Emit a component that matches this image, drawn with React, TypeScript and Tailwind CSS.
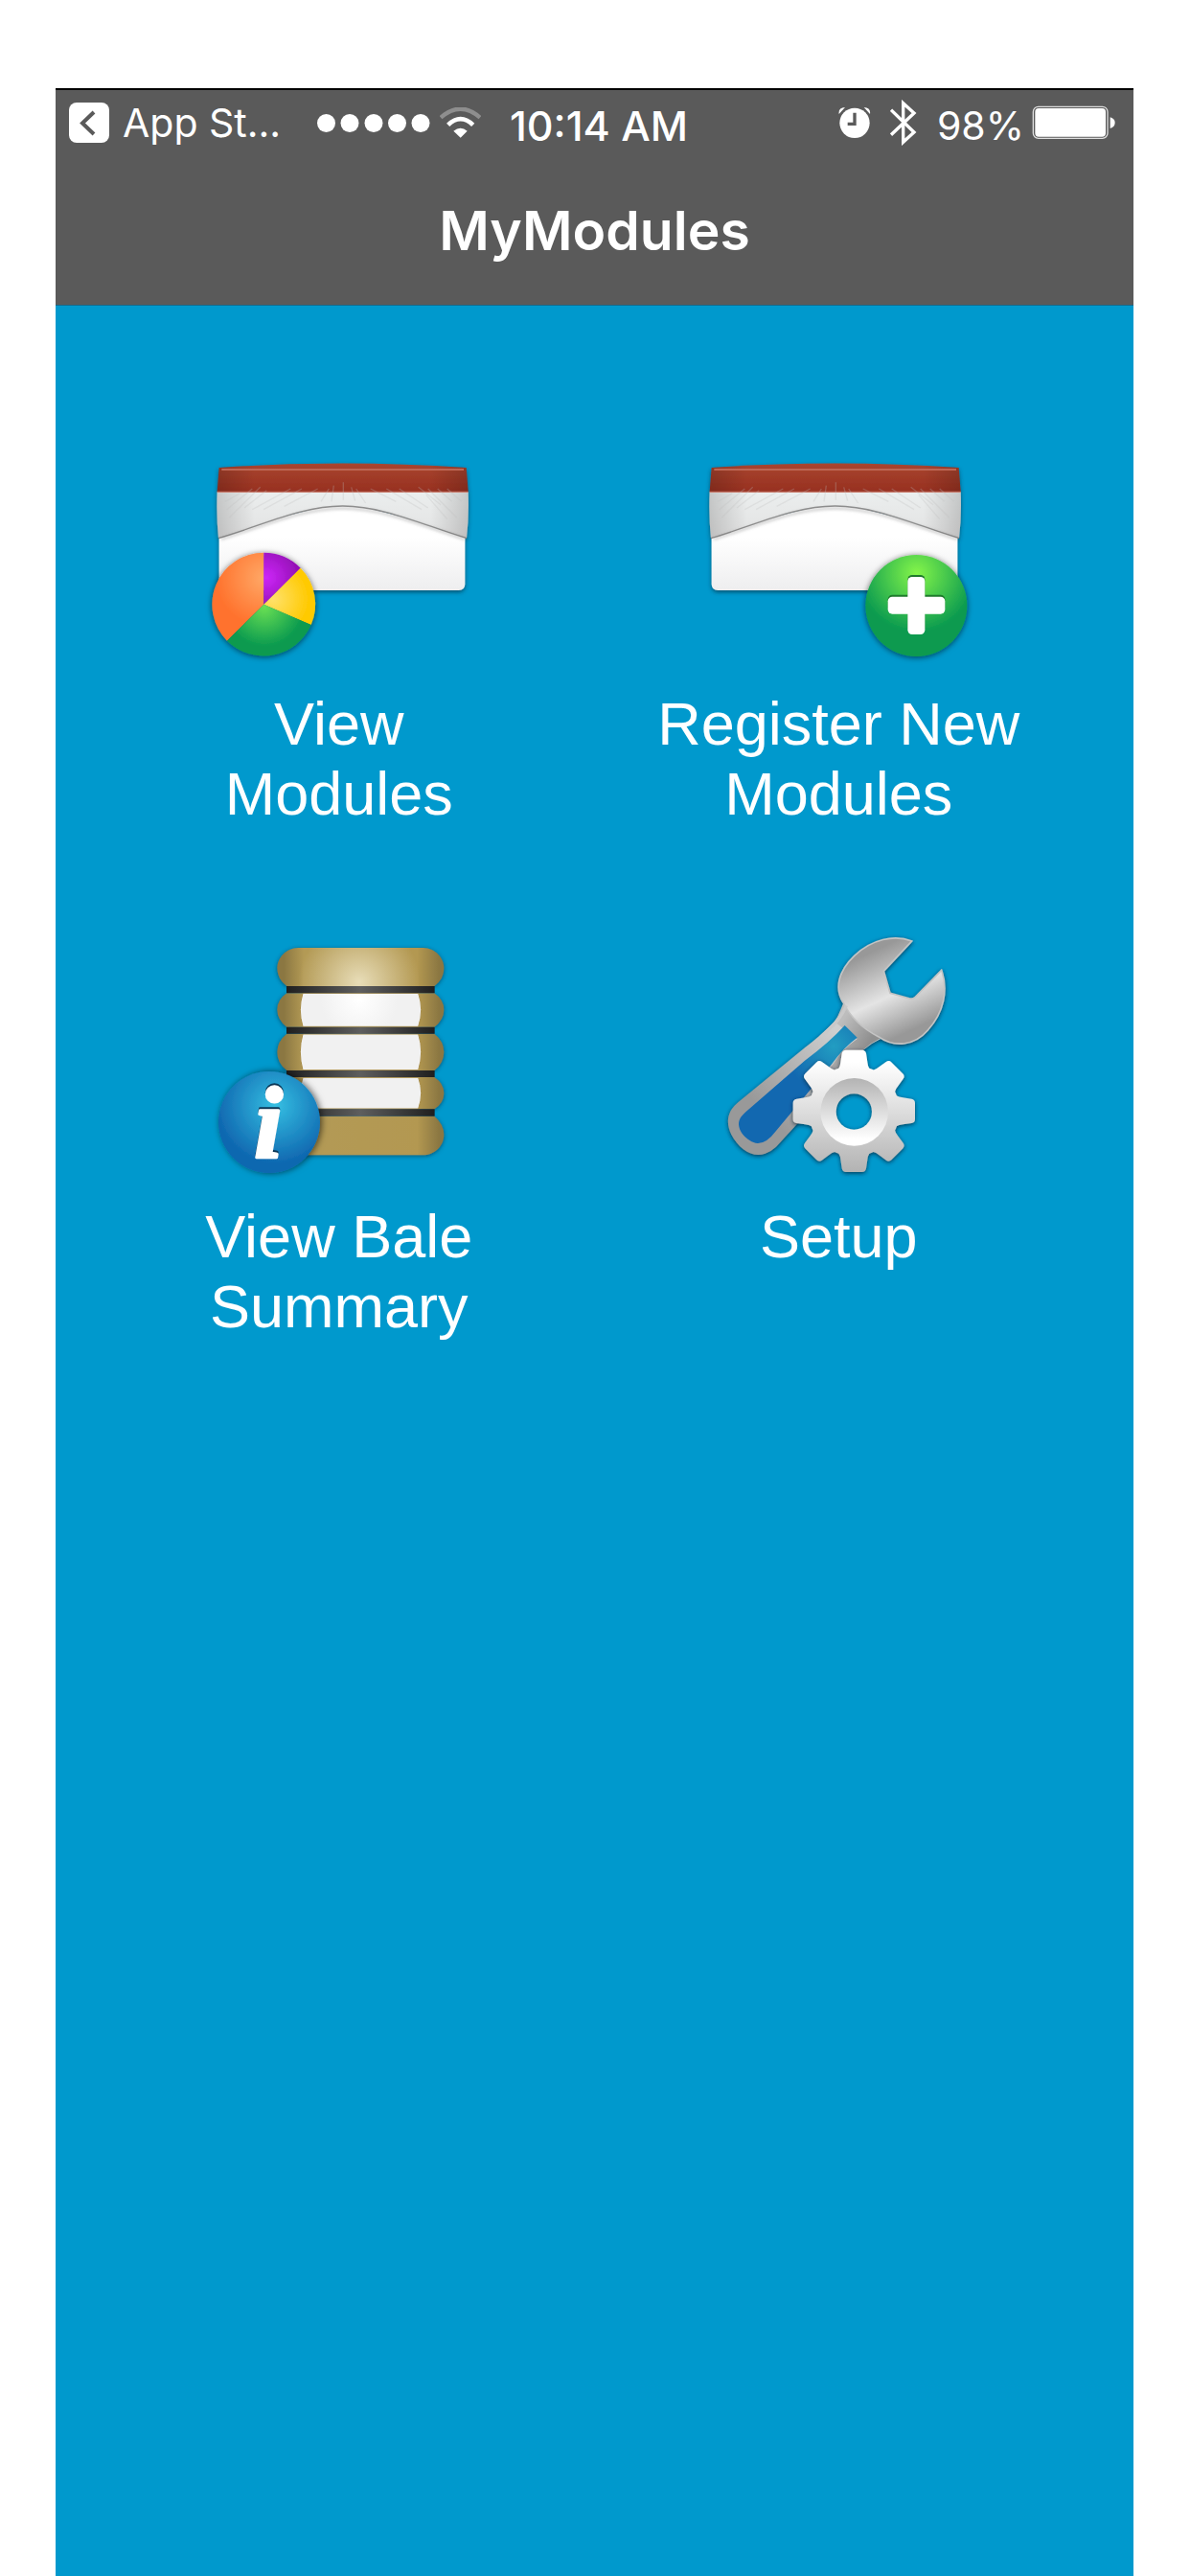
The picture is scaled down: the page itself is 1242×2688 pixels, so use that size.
import type { ReactNode } from 'react';

const WRINKLES = [
    'M190 150 L110 215', 'M215 145 L118 240', 'M150 165 L105 190', 'M235 155 L165 210', 'M310 150 L190 215',
    'M345 150 L225 215', 'M395 150 L290 205', 'M430 150 L405 190', 'M445 140 L438 190', 'M475 130 L475 185',
    'M500 145 L512 188', 'M515 150 L545 195', 'M560 150 L640 190', 'M610 150 L720 215', 'M650 150 L740 210',
    'M710 145 L780 200', 'M740 150 L830 240', 'M770 150 L815 190', 'M800 150 L845 190', 'M735 170 L800 245',
];

const TEETH = [0, 45, 90, 135, 180, 225, 270, 315];

function CottonModule({ id }: { id: string }) {
    return (
        <>
            <defs>
                <linearGradient id={`${id}-body`} x1="0" y1="0" x2="0" y2="1">
                    <stop offset="0.4" stopColor="#ffffff" />
                    <stop offset="1" stopColor="#eeeeef" />
                </linearGradient>
                <linearGradient id={`${id}-red`} x1="0" y1="0" x2="0" y2="1">
                    <stop offset="0" stopColor="#a9452f" />
                    <stop offset="1" stopColor="#973020" />
                </linearGradient>
                <linearGradient id={`${id}-cover`} x1="0" y1="0" x2="0" y2="1">
                    <stop offset="0" stopColor="#ebeeee" />
                    <stop offset="1" stopColor="#e2e2e2" />
                </linearGradient>
                <linearGradient id={`${id}-sides`} x1="0" y1="0" x2="1" y2="0">
                    <stop offset="0" stopColor="#000" stopOpacity="0.16" />
                    <stop offset="0.15" stopColor="#000" stopOpacity="0" />
                    <stop offset="0.85" stopColor="#000" stopOpacity="0" />
                    <stop offset="1" stopColor="#000" stopOpacity="0.16" />
                </linearGradient>
                <filter id={`${id}-shadow`} x="-10%" y="-10%" width="120%" height="130%">
                    <feDropShadow dx="0" dy="6" stdDeviation="7" floodColor="#00304a" floodOpacity="0.7" />
                </filter>
                <filter id={`${id}-soft`} x="-10%" y="-20%" width="120%" height="140%">
                    <feGaussianBlur stdDeviation="5" />
                </filter>
            </defs>
            <g filter={`url(#${id}-shadow)`}>
                <path d="M86 290 V448 Q86 468 106 468 H836 Q856 468 856 448 V290 L473 190 Z" fill={`url(#${id}-body)`} />
                <path d="M80 160 H866 Q869 240 861 305 C720 262 600 205 473 205 C346 205 230 262 84 305 Q77 240 80 160 Z" fill={`url(#${id}-cover)`} />
                <path d="M86 84 Q473 57 860 84 L866 160 H80 Z" fill={`url(#${id}-red)`} />
            </g>
            <path d="M92 308 C230 265 346 211 473 211 C600 211 720 265 856 308" fill="none" stroke="#777" strokeOpacity="0.35" strokeWidth="8" filter={`url(#${id}-soft)`} />
            <path d="M84 305 C230 262 346 204 473 204 C600 204 720 262 861 305" fill="none" stroke="#8d8d8d" strokeWidth="4" />
            <path d="M86 84 Q473 57 860 84 L866 160 Q869 240 861 305 C720 262 600 205 473 205 C346 205 230 262 84 305 Q77 240 80 160 Z" fill={`url(#${id}-sides)`} />
            <path d="M94 90 H852" stroke="#bd6654" strokeWidth="6" />
            <path d="M80 160 H866" stroke="#c77a6b" strokeWidth="4" />
            <g stroke="#bdbdbd" strokeOpacity="0.28" strokeWidth="4">
                {WRINKLES.map((d) => (
                    <path key={d} d={d} />
                ))}
            </g>
        </>
    );
}

function ViewModulesIcon() {
    return (
        <svg className="h-[240px] w-[300px]" viewBox="12 27 900 720" aria-hidden="true">
            <defs>
                <radialGradient id="pie-orange" gradientUnits="userSpaceOnUse" cx="226" cy="430" r="150">
                    <stop offset="0" stopColor="#ffa866" />
                    <stop offset="1" stopColor="#ff722d" />
                </radialGradient>
                <radialGradient id="pie-purple" gradientUnits="userSpaceOnUse" cx="235" cy="428" r="100">
                    <stop offset="0" stopColor="#cc26f8" />
                    <stop offset="1" stopColor="#9410b5" />
                </radialGradient>
                <radialGradient id="pie-yellow" gradientUnits="userSpaceOnUse" cx="255" cy="495" r="110">
                    <stop offset="0" stopColor="#ffe16a" />
                    <stop offset="1" stopColor="#ffca04" />
                </radialGradient>
                <radialGradient id="pie-green" gradientUnits="userSpaceOnUse" cx="228" cy="520" r="125">
                    <stop offset="0" stopColor="#69df52" />
                    <stop offset="1" stopColor="#0a9a50" />
                </radialGradient>
                <filter id="pie-shadow" x="-20%" y="-20%" width="140%" height="140%">
                    <feDropShadow dx="0" dy="3" stdDeviation="10" floodColor="#000" floodOpacity="0.6" />
                </filter>
            </defs>
            <CottonModule id="view" />
            <g filter="url(#pie-shadow)">
                <path d="M226 512 L111 626 A162 162 0 0 1 226 350 Z" fill="url(#pie-orange)" />
                <path d="M226 512 V350 A162 162 0 0 1 341 398 Z" fill="url(#pie-purple)" />
                <path d="M226 512 L341 398 A162 162 0 0 1 374 576 Z" fill="url(#pie-yellow)" />
                <path d="M226 512 L374 576 A162 162 0 0 1 111 626 Z" fill="url(#pie-green)" />
            </g>
        </svg>
    );
}

function RegisterIcon() {
    return (
        <svg className="h-[240px] w-[300px]" viewBox="33 27 900 720" aria-hidden="true">
            <defs>
                <radialGradient id="add-fill" gradientUnits="userSpaceOnUse" cx="728" cy="415" r="185">
                    <stop offset="0" stopColor="#84f54a" />
                    <stop offset="1" stopColor="#0a9a50" />
                </radialGradient>
                <filter id="add-shadow" x="-20%" y="-20%" width="140%" height="140%">
                    <feDropShadow dx="0" dy="3" stdDeviation="10" floodColor="#000" floodOpacity="0.6" />
                </filter>
            </defs>
            <CottonModule id="register" />
            <circle cx="727" cy="516" r="159" fill="url(#add-fill)" filter="url(#add-shadow)" />
            <g fill="#1f7a2c">
                <rect x="700" y="420" width="54" height="180" rx="14" />
                <rect x="638" y="482" width="179" height="54" rx="14" />
            </g>
            <g fill="#fff">
                <rect x="700" y="426" width="54" height="180" rx="14" />
                <rect x="638" y="488" width="179" height="54" rx="14" />
            </g>
        </svg>
    );
}

function BaleIcon() {
    return (
        <svg className="h-[284px] w-[300px]" viewBox="12 0 900 852" aria-hidden="true">
            <defs>
                <linearGradient id="bale-side" gradientUnits="userSpaceOnUse" x1="268" y1="0" x2="790" y2="0">
                    <stop offset="0.04" stopColor="#8b7742" />
                    <stop offset="0.16" stopColor="#b39a55" />
                    <stop offset="0.84" stopColor="#b39851" />
                    <stop offset="0.97" stopColor="#8b7742" />
                </linearGradient>
                <radialGradient id="bale-glow" gradientUnits="userSpaceOnUse" cx="525" cy="195" r="190">
                    <stop offset="0" stopColor="#e8ddb8" />
                    <stop offset="1" stopColor="#e8ddb8" stopOpacity="0" />
                </radialGradient>
                <linearGradient id="bale-strap" gradientUnits="userSpaceOnUse" x1="297" y1="0" x2="760" y2="0">
                    <stop offset="0" stopColor="#1f1f1f" />
                    <stop offset="0.5" stopColor="#5e5e5e" />
                    <stop offset="1" stopColor="#1f1f1f" />
                </linearGradient>
                <radialGradient id="bale-white" gradientUnits="userSpaceOnUse" cx="525" cy="250" r="120">
                    <stop offset="0" stopColor="#fff" />
                    <stop offset="1" stopColor="#f1f1f1" />
                </radialGradient>
                <radialGradient id="info-fill" gradientUnits="userSpaceOnUse" cx="262" cy="580" r="185">
                    <stop offset="0" stopColor="#35bfe2" />
                    <stop offset="1" stopColor="#0f67b0" />
                </radialGradient>
                <filter id="bale-shadow" x="-10%" y="-10%" width="120%" height="120%">
                    <feDropShadow dx="0" dy="3" stdDeviation="7" floodColor="#00304a" floodOpacity="0.7" />
                </filter>
                <filter id="info-shadow" x="-20%" y="-20%" width="150%" height="150%">
                    <feDropShadow dx="5" dy="0" stdDeviation="11" floodColor="#000" floodOpacity="0.6" />
                </filter>
            </defs>
            <g filter="url(#bale-shadow)">
                <path d="M335 87 H724 C765 87 790 122 790 150 Q790 185 760 207 H298 Q268 185 268 150 C268 122 293 87 335 87 Z" fill="url(#bale-side)" />
                <path d="M298 229 H760 Q790 250 790 281 Q790 312 760 335 H298 Q268 312 268 281 Q268 250 298 229 Z" fill="url(#bale-side)" />
                <path d="M298 356 H760 Q790 380 790 413 Q790 448 760 471 H298 Q268 448 268 413 Q268 380 298 356 Z" fill="url(#bale-side)" />
                <path d="M298 492 H760 Q790 512 790 542 Q790 572 760 592 H298 Q268 572 268 542 Q268 512 298 492 Z" fill="url(#bale-side)" />
                <path d="M298 614 H760 Q790 640 790 672 C790 708 760 736 724 736 H335 C298 736 268 708 268 672 Q268 640 298 614 Z" fill="url(#bale-side)" />
                <path d="M335 87 H724 C765 87 790 122 790 150 Q790 185 760 207 H298 Q268 185 268 150 C268 122 293 87 335 87 Z" fill="url(#bale-glow)" />
            </g>
            <g stroke="#a88d49" strokeWidth="3">
                <path d="M348 229 H710 Q728 281 710 334 H348 Q332 281 348 229 Z" fill="url(#bale-white)" />
                <path d="M348 357 H710 Q728 413 710 470 H348 Q332 413 348 357 Z" fill="#f1f1f1" />
                <path d="M348 493 H710 Q728 542 710 591 H348 Q332 542 348 493 Z" fill="#f1f1f1" />
            </g>
            <path d="M297 207 H761 V229 H297 Z M297 335 H761 V356 H297 Z M297 471 H761 V492 H297 Z M297 592 H761 V614 H297 Z" fill="url(#bale-strap)" />
            <circle cx="243" cy="633" r="159" fill="url(#info-fill)" filter="url(#info-shadow)" />
            <g className="font-['Liberation_Serif',serif] text-[320px] font-bold italic" textAnchor="middle" strokeWidth="10" strokeLinejoin="round">
                <text x="240" y="738" fill="#0b3656" stroke="#0b3656">i</text>
                <text x="240" y="744" fill="#fff" stroke="#fff">i</text>
            </g>
        </svg>
    );
}

function SetupIcon() {
    return (
        <svg className="h-[284px] w-[300px]" viewBox="-15 0 900 852" aria-hidden="true">
            <defs>
                <linearGradient id="wrench-head" gradientUnits="userSpaceOnUse" x1="500" y1="100" x2="640" y2="400">
                    <stop offset="0.05" stopColor="#989898" />
                    <stop offset="0.5" stopColor="#e4e4e4" />
                    <stop offset="0.88" stopColor="#989898" />
                </linearGradient>
                <linearGradient id="wrench-handle" gradientUnits="userSpaceOnUse" x1="430" y1="350" x2="190" y2="590">
                    <stop offset="0" stopColor="#cfcfcf" />
                    <stop offset="1" stopColor="#999999" />
                </linearGradient>
                <linearGradient id="wrench-neck" gradientUnits="userSpaceOnUse" x1="450" y1="310" x2="540" y2="370">
                    <stop offset="0" stopColor="#bdbdbd" />
                    <stop offset="1" stopColor="#8f8f8f" />
                </linearGradient>
                <radialGradient id="wrench-grip" gradientUnits="userSpaceOnUse" cx="420" cy="395" r="190">
                    <stop offset="0" stopColor="#229dc2" />
                    <stop offset="0.8" stopColor="#1268b0" />
                </radialGradient>
                <linearGradient id="gear-fill" gradientUnits="userSpaceOnUse" x1="0" y1="407" x2="0" y2="788">
                    <stop offset="0.1" stopColor="#fff" />
                    <stop offset="1" stopColor="#b3b3b3" />
                </linearGradient>
                <linearGradient id="gear-ring" x1="0" y1="0" x2="0" y2="1">
                    <stop offset="0" stopColor="#b3b3b3" />
                    <stop offset="0.9" stopColor="#fff" />
                </linearGradient>
                <mask id="gear-mask" maskUnits="userSpaceOnUse" x="280" y="390" width="410" height="420">
                    <circle cx="484" cy="598" r="142" fill="#fff" />
                    {TEETH.map((angle) => (
                        <path
                            key={angle}
                            d="M426 480 L436 465 Q441 458 442 445 L446 418 Q448 407 459 407 H509 Q520 407 522 418 L526 445 Q527 458 532 465 L542 480 Z"
                            fill="#fff"
                            transform={`rotate(${angle} 484 598)`}
                        />
                    ))}
                    <circle cx="484" cy="600" r="56" fill="#000" />
                </mask>
                <filter id="setup-shadow" x="-15%" y="-15%" width="130%" height="130%">
                    <feDropShadow dx="0" dy="4" stdDeviation="7" floodColor="#002238" floodOpacity="0.8" />
                </filter>
            </defs>
            <g filter="url(#setup-shadow)">
                <path d="M452 258 Q440 305 405 336 Q375 365 330 400 L122 570 C86 598 82 636 100 672 C124 718 168 746 206 731 Q224 725 240 710 L470 460 Q505 400 567 372 Z" fill="url(#wrench-handle)" />
                <path d="M452 258 L425 320 L494 372 Q440 410 420 450 L350 535 L365 560 L470 460 Q505 400 567 370 Z" fill="url(#wrench-neck)" />
                <path d="M665 66 C610 45 540 60 485 112 C435 160 422 215 450 258 Q482 325 560 365 C610 400 672 395 715 345 C765 290 780 220 758 157 L674 243 Q668 248 659 246 L597 229 L577 160 Z" fill="url(#wrench-head)" stroke="#c4c4c4" strokeWidth="5" />
            </g>
            <path d="M460 268 Q446 300 424 324 L380 366" fill="none" stroke="#c9c9c9" strokeWidth="10" />
            <path d="M455 330 L494 368 Q450 400 415 450 L240 660 Q210 700 182 699 C150 696 112 655 126 624 Q130 615 145 601 L330 440 Q405 385 455 330 Z" fill="url(#wrench-grip)" />
            <g filter="url(#setup-shadow)">
                <g mask="url(#gear-mask)">
                    <rect x="280" y="390" width="410" height="420" fill="url(#gear-fill)" />
                    <circle cx="485" cy="601" r="106" fill="url(#gear-ring)" />
                </g>
            </g>
        </svg>
    );
}

function StatusBar() {
    return (
        <div className="flex h-[68px] items-center pr-[18px] pl-[14px] text-[41px] leading-none">
            <a href="#" className="flex w-[259px] shrink-0 items-center gap-[14px]">
                <svg className="size-[42px]" viewBox="0 0 42 42" aria-hidden="true">
                    <rect width="42" height="42" rx="8" fill="#fff" />
                    <path d="M26 10 L14 21.5 L26 33" fill="none" stroke="#5a5a5a" strokeWidth="4" />
                </svg>
                <span>App St...</span>
            </a>
            <svg className="h-[19px] w-[118px] shrink-0" viewBox="0 0 118 19" fill="#fff" aria-hidden="true">
                <circle cx="9.5" cy="9.5" r="9.5" />
                <circle cx="34" cy="9.5" r="9.5" />
                <circle cx="59" cy="9.5" r="9.5" />
                <circle cx="83.5" cy="9.5" r="9.5" />
                <circle cx="108" cy="9.5" r="9.5" />
            </svg>
            <svg className="ml-[10px] h-[32px] w-[43px] shrink-0" viewBox="87 98 129 96" aria-hidden="true">
                <path d="M90 130 Q152 76 213 130" fill="none" stroke="#8e8e8e" strokeWidth="13" />
                <path d="M113 153 Q152 116 191 153" fill="none" stroke="#fff" strokeWidth="14" />
                <path d="M130 172 Q152 154 173 172 L152 193 Z" fill="#fff" />
            </svg>
            <time className="ml-[30px] pt-1.5 text-[43px] font-medium whitespace-nowrap">10:14 AM</time>
            <div className="ml-auto flex items-center">
                <svg className="h-[34px] w-[34px]" viewBox="137 99 102 102" aria-hidden="true">
                    <circle cx="188" cy="151" r="47" fill="#fff" />
                    <path d="M139 123 Q136 103 158 102 Z M236 123 Q239 103 217 102 Z" fill="#fff" />
                    <path d="M188 119 V154 H166" fill="none" stroke="#5a5a5a" strokeWidth="10" />
                </svg>
                <svg className="ml-[20px] h-[48px] w-[28px]" viewBox="299 77 84 144" fill="none" stroke="#fff" strokeWidth="10" aria-hidden="true">
                    <path d="M302 109 L374 179 L340 210 V88 L374 119 L302 187" />
                </svg>
                <span className="ml-[21px] pt-1.5">98%</span>
                <svg className="ml-[8px] h-[36px] w-[88px]" viewBox="740 96 264 108" aria-hidden="true">
                    <rect x="744" y="100" width="233" height="99" rx="16" fill="none" stroke="#ddd" strokeWidth="4" />
                    <rect x="750" y="105" width="221" height="89" rx="11" fill="#fff" />
                    <path d="M985 133 Q1000 138 1000 150 Q1000 163 985 168 Z" fill="#fff" />
                </svg>
            </div>
        </div>
    );
}

function MenuItem({ icon, children }: { icon: ReactNode; children: ReactNode }) {
    return (
        <button type="button" className="flex flex-col items-center gap-[10px]">
            {icon}
            <span className="text-[63px] leading-[73px]">{children}</span>
        </button>
    );
}

export default function App() {
    return (
        <div className="flex min-h-screen flex-col bg-white pt-[92px] pr-[59px] pl-[58px] text-white">
            <header className="h-[227px] border-t-2 border-b border-t-black border-b-[#17688a] bg-[#5a5a5a] font-['Inter',sans-serif]">
                <StatusBar />
                <h1 className="pt-[43px] text-center text-[57px] leading-[72px] font-semibold">MyModules</h1>
            </header>
            <main className="flex-1 bg-[#0099cd] pt-[150px] pr-[47px] pl-[35px] font-['Liberation_Sans',sans-serif]">
                <nav className="grid grid-cols-2 items-start gap-y-[95px]">
                    <MenuItem icon={<ViewModulesIcon />}>View<br />Modules</MenuItem>
                    <MenuItem icon={<RegisterIcon />}>Register New<br />Modules</MenuItem>
                    <MenuItem icon={<BaleIcon />}>View Bale<br />Summary</MenuItem>
                    <MenuItem icon={<SetupIcon />}>Setup</MenuItem>
                </nav>
            </main>
        </div>
    );
}
